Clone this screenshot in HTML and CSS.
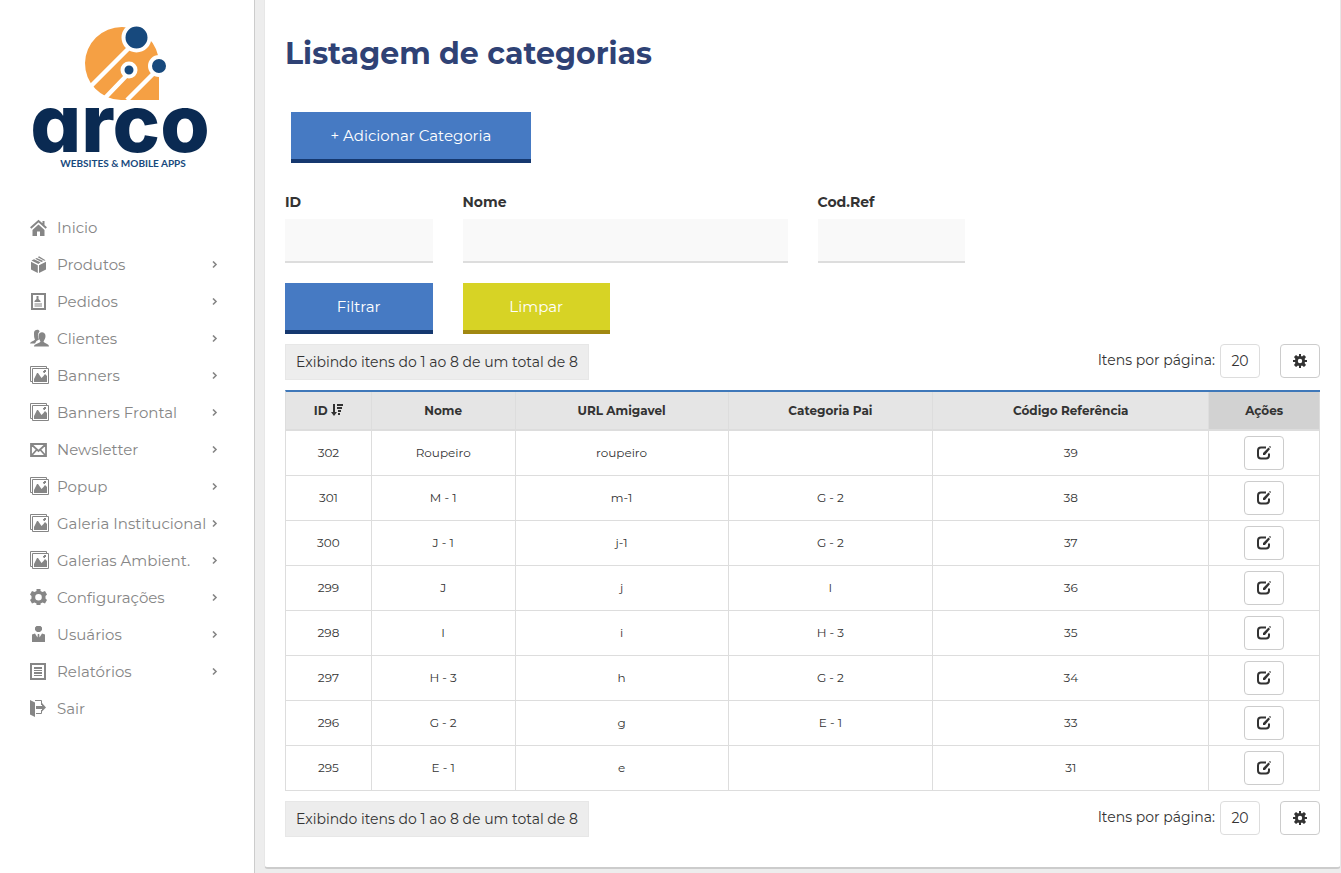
FILE: index.html
```html
<!DOCTYPE html>
<html lang="pt-BR">
<head>
<meta charset="utf-8">
<meta name="viewport" content="width=device-width, initial-scale=1">
<title>Listagem de categorias</title>
<link rel="stylesheet" href="styles.css">
</head>
<body>
<svg class="sprite" aria-hidden="true">
  <symbol id="i-home" viewBox="0 0 20 20"><path d="M.7 10 8.500 3 16.300 10M13.500 3v4" fill="none" stroke="currentColor" stroke-width="2"/><path d="M2.500 12 8.500 6.500 14.500 12v6H10v-4.500H7V18H2.500z"/></symbol>
  <symbol id="i-box" viewBox="0 0 20 20"><path d="M1 6.800l6.800 3.400V18L1 14.500zM9 10.200l7-3.400v7.700L9 18zM1.500 5.600 4 4.300l6.500 3L8.400 9zM5.200 3.700 6.700 2.900l6.600 3.200-1.800.8zM7.800 2.200 9 1.300l6.500 3.900-1.200.5z"/></symbol>
  <symbol id="i-order" viewBox="0 0 20 20"><path d="M2 2h13v15H2z" fill="none" stroke="currentColor" stroke-width="2"/><path d="M6.500 4h2v3l2 2v1h-6V9l2-2zM4.500 11.500H12v1H4.500zM4.500 13.500H12v1H4.500z"/></symbol>
  <symbol id="i-people" viewBox="0 0 20 20"><path d="M4 4c0-4 5.500-4 5.500-1.500C7.500 4.500 7.500 8 9 10.500l-2.500 1.500-1.500 2.500H0c.5-2 4-2.500 5-4-1-1.500-1-4-1-6.500zM8.500 7c0-5 7-5 7 0 0 2-.8 3.500-2 5.500 1 2 5.500 2 5.500 5H4c0-3 5.500-3 6.500-5-1.200-2-2-3.500-2-5.500z"/></symbol>
  <symbol id="i-image" viewBox="0 0 20 20"><path d="M2.500 15.500h-2v-15h16v2M2.500 2.500h16v15h-16z" fill="none" stroke="currentColor"/><path d="M4 16v-3l3-6h1l3.500 5 2-2 1.500-2 2 2v6zM13 6V5h1V4h2v2h-1v1h-1z"/></symbol>
  <symbol id="i-mail" viewBox="0 0 20 20"><path d="M1 4h15v12H1zM2 5l6.500 6L15 5M2 15l4.500-5M15 15l-4.500-5" fill="none" stroke="currentColor" stroke-width="1.800"/></symbol>
  <symbol id="i-gear" viewBox="0 0 20 20"><path fill-rule="evenodd" d="M6.500 1h4v2l2 1 2.500-1 2 3.500L15.500 8v2.500L17 12l-2 3.500-2.500-1-2 1V17h-4v-1.500l-2-1-2.500 1L0 12l1.500-1.500V8L0 6.500 2 3l2.500 1 2-1zm2 5a3.300 3.300 0 100 6.600 3.300 3.300 0 000-6.600z"/></symbol>
  <symbol id="i-user" viewBox="0 0 20 20"><path d="M6.500 1h4l1.500 1.500V5l-2 2H7L5 5V2.500zM2 9.500 5 8.500l2.500 4 .3-3.500h1.400l.3 3.500 2.500-4 3 1V17H2z"/></symbol>
  <symbol id="i-report" viewBox="0 0 20 20"><path d="M1 2h14v15H1z" fill="none" stroke="currentColor" stroke-width="2"/><path d="M4 5h8v2H4zM4 8h8v1H4zM4 10h8v2H4zM4 13h8v1H4z"/></symbol>
  <symbol id="i-exit" viewBox="0 0 20 20"><path d="M5 1.500h6.500V6M11.500 11v3.500H6" fill="none" stroke="currentColor"/><path d="M0 1l5 2.500V18l-5-2.500zM6 7h6V4l4 4.500-4 4V10H6z"/></symbol>
  <symbol id="i-arrow" viewBox="0 0 6 8"><path d="M1 .5l3 3-3 3" fill="none" stroke="currentColor" stroke-width="1.600"/></symbol>
  <symbol id="i-cog" viewBox="0 0 14 14"><path fill-rule="evenodd" d="M6 0h2v2l1 .4L11 1l2 2-1.400 2 .4 1h2v2h-2l-.4 1L13 11l-2 2-2-1.400-1 .4v2H6v-2l-1-.4L3 13l-2-2 1.400-2L2 8H0V6h2l.4-1L1 3l2-2 2 1.400L6 2zm1 4.800a2.200 2.200 0 100 4.400 2.200 2.200 0 000-4.400z"/></symbol>
  <symbol id="i-edit" viewBox="0 0 14 14"><path d="M9 1.500H4Q1 1.500 1 4.500v5q0 3 3 3h5q3 0 3-3V7.500" fill="none" stroke="currentColor" stroke-width="2"/><path d="M6 9V7l5.500-5.500L13 3 8 9zM12 .8l1-.8 1 1-.8 1z"/></symbol>
  <symbol id="i-sort" viewBox="0 0 12 12"><path d="M2 0h2v8h2l-3 4-3-4h2zM6 0h6v2H6zM6 3h5v2H6zM7 6h3v2H7zM7 9h2v2H7z"/></symbol>
</svg>
<div class="layout">
  <aside class="sidebar">
    <svg class="logo" viewBox="0 0 180 160" role="img" aria-label="Arco Websites &amp; Mobile Apps">
      <path d="M129 75H91A37 36.500 0 1 1 129 38z" fill="#f5a044"/>
      <path d="M60 62 107 15M74 74 99 48M97 75 129 43" stroke="#fff" stroke-width="4.500"/>
      <g fill="#17497d" stroke="#fff" stroke-width="4"><circle cx="106.500" cy="12.500" r="13"/><circle cx="129" cy="41" r="9"/><circle cx="99" cy="45" r="6.500"/></g>
      <text class="logo-name" x="90" y="127" text-anchor="middle">arco</text>
      <text class="logo-tag" x="93" y="142" text-anchor="middle">WEBSITES &amp; MOBILE APPS</text>
    </svg>
    <nav class="menu">
      <a href="#"><svg class="icon"><use href="#i-home"/></svg><span>Inicio</span></a>
      <a href="#"><svg class="icon"><use href="#i-box"/></svg><span>Produtos</span><svg class="arrow"><use href="#i-arrow"/></svg></a>
      <a href="#"><svg class="icon"><use href="#i-order"/></svg><span>Pedidos</span><svg class="arrow"><use href="#i-arrow"/></svg></a>
      <a href="#"><svg class="icon"><use href="#i-people"/></svg><span>Clientes</span><svg class="arrow"><use href="#i-arrow"/></svg></a>
      <a href="#"><svg class="icon"><use href="#i-image"/></svg><span>Banners</span><svg class="arrow"><use href="#i-arrow"/></svg></a>
      <a href="#"><svg class="icon"><use href="#i-image"/></svg><span>Banners Frontal</span><svg class="arrow"><use href="#i-arrow"/></svg></a>
      <a href="#"><svg class="icon"><use href="#i-mail"/></svg><span>Newsletter</span><svg class="arrow"><use href="#i-arrow"/></svg></a>
      <a href="#"><svg class="icon"><use href="#i-image"/></svg><span>Popup</span><svg class="arrow"><use href="#i-arrow"/></svg></a>
      <a href="#"><svg class="icon"><use href="#i-image"/></svg><span>Galeria Institucional</span><svg class="arrow"><use href="#i-arrow"/></svg></a>
      <a href="#"><svg class="icon"><use href="#i-image"/></svg><span>Galerias Ambient.</span><svg class="arrow"><use href="#i-arrow"/></svg></a>
      <a href="#"><svg class="icon"><use href="#i-gear"/></svg><span>Configurações</span><svg class="arrow"><use href="#i-arrow"/></svg></a>
      <a href="#"><svg class="icon"><use href="#i-user"/></svg><span>Usuários</span><svg class="arrow"><use href="#i-arrow"/></svg></a>
      <a href="#"><svg class="icon"><use href="#i-report"/></svg><span>Relatórios</span><svg class="arrow"><use href="#i-arrow"/></svg></a>
      <a href="#"><svg class="icon"><use href="#i-exit"/></svg><span>Sair</span></a>
    </nav>
  </aside>
  <main class="panel">
    <h1>Listagem de categorias</h1>
    <a class="btn btn-add" href="#">+ Adicionar Categoria</a>
    <form class="filters">
      <div class="field"><label for="f-id">ID</label><input id="f-id" type="text"></div>
      <div class="field field-wide"><label for="f-nome">Nome</label><input id="f-nome" type="text"></div>
      <div class="field"><label for="f-ref">Cod.Ref</label><input id="f-ref" type="text"></div>
      <button class="btn btn-filter" type="button">Filtrar</button>
      <button class="btn btn-clear" type="reset">Limpar</button>
    </form>
    <div class="toolbar">
      <div class="summary">Exibindo itens do 1 ao 8 de um total de 8</div>
      <label for="size-top">Itens por página:</label>
      <button id="size-top" class="tool size" type="button">20</button>
      <button class="tool" type="button" aria-label="Opções"><svg class="glyph"><use href="#i-cog"/></svg></button>
    </div>
    <table class="grid">
      <colgroup><col class="c-id"><col class="c-nome"><col class="c-url"><col class="c-pai"><col class="c-ref"><col class="c-acoes"></colgroup>
      <thead><tr><th>ID <svg class="sort"><use href="#i-sort"/></svg></th><th>Nome</th><th>URL Amigavel</th><th>Categoria Pai</th><th>Código Referência</th><th class="actions">Ações</th></tr></thead>
      <tbody>
        <tr><td>302</td><td>Roupeiro</td><td>roupeiro</td><td></td><td>39</td><td><button class="tool" type="button" aria-label="Editar"><svg class="glyph"><use href="#i-edit"/></svg></button></td></tr>
        <tr><td>301</td><td>M - 1</td><td>m-1</td><td>G - 2</td><td>38</td><td><button class="tool" type="button" aria-label="Editar"><svg class="glyph"><use href="#i-edit"/></svg></button></td></tr>
        <tr><td>300</td><td>J - 1</td><td>j-1</td><td>G - 2</td><td>37</td><td><button class="tool" type="button" aria-label="Editar"><svg class="glyph"><use href="#i-edit"/></svg></button></td></tr>
        <tr><td>299</td><td>J</td><td>j</td><td>I</td><td>36</td><td><button class="tool" type="button" aria-label="Editar"><svg class="glyph"><use href="#i-edit"/></svg></button></td></tr>
        <tr><td>298</td><td>I</td><td>i</td><td>H - 3</td><td>35</td><td><button class="tool" type="button" aria-label="Editar"><svg class="glyph"><use href="#i-edit"/></svg></button></td></tr>
        <tr><td>297</td><td>H - 3</td><td>h</td><td>G - 2</td><td>34</td><td><button class="tool" type="button" aria-label="Editar"><svg class="glyph"><use href="#i-edit"/></svg></button></td></tr>
        <tr><td>296</td><td>G - 2</td><td>g</td><td>E - 1</td><td>33</td><td><button class="tool" type="button" aria-label="Editar"><svg class="glyph"><use href="#i-edit"/></svg></button></td></tr>
        <tr><td>295</td><td>E - 1</td><td>e</td><td></td><td>31</td><td><button class="tool" type="button" aria-label="Editar"><svg class="glyph"><use href="#i-edit"/></svg></button></td></tr>
      </tbody>
    </table>
    <div class="toolbar">
      <div class="summary">Exibindo itens do 1 ao 8 de um total de 8</div>
      <label for="size-bottom">Itens por página:</label>
      <button id="size-bottom" class="tool size" type="button">20</button>
      <button class="tool" type="button" aria-label="Opções"><svg class="glyph"><use href="#i-cog"/></svg></button>
    </div>
  </main>
</div>
</body>
</html>
```
FILE: styles.css
```css
* { box-sizing: border-box; }
body {
  margin: 0;
  background: #ededed;
  color: #333;
  font: 400 14px/20px Montserrat, Inter, sans-serif;
}
button, input { font: inherit; color: inherit; }
svg { fill: currentColor; flex: none; }
.sprite { position: absolute; width: 0; height: 0; }

.layout { display: flex; min-height: 100vh; }
.sidebar {
  flex: none;
  width: 255px;
  padding: 25px 30px;
  background: #fff;
  border-right: 1px solid #ccc;
}
.logo { display: block; width: 180px; height: 160px; margin-bottom: 24px; }
.logo-name { font: 800 80px Inter, sans-serif; font-feature-settings: "cv11"; fill: #0a2a52; }
.logo-tag { font: 700 10px Lato, sans-serif; fill: #17497d; }
.menu { display: flex; flex-direction: column; }
.menu a {
  display: flex;
  align-items: center;
  height: 37px;
  color: #868686;
  font-size: 15px;
  text-decoration: none;
}
.menu span { flex: 1; white-space: nowrap; }
.icon { width: 20px; height: 20px; margin-right: 7px; }
.arrow { width: 6px; height: 8px; margin-right: 6px; }

.panel {
  flex: 1;
  min-width: 0;
  align-self: flex-start;
  margin: 0 0 4px 9px;
  padding: 34px 20px 30px;
  background: #fff;
  border: 1px solid #e7e7e7;
  border-top: 0;
  border-bottom: 2px solid #ccc;
  border-radius: 0 0 4px 4px;
}
h1 { margin: 0 0 38px; color: #2f4275; font-size: 30px; line-height: 40px; font-weight: 700; }
.btn {
  display: block;
  height: 51px;
  border: 0;
  border-bottom: 4px solid #15386f;
  background: #467ac3;
  color: #fff;
  font-size: 15px;
  line-height: 47px;
  padding: 0;
  text-align: center;
  text-decoration: none;
}
.btn-add { width: 240px; margin-left: 6px; }
.filters {
  display: grid;
  grid-template-columns: repeat(12, 1fr);
  gap: 20px 30px;
  margin: 29px 0 10px;
}
.field { grid-column: span 2; }
.field-wide { grid-column: span 4; }
.field label { display: block; margin-bottom: 7px; font-weight: 700; }
.field input {
  display: block;
  width: 100%;
  height: 44px;
  padding: 6px 12px;
  border: 0;
  border-bottom: 2px solid #ddd;
  background: #f9f9f9;
}
.btn-filter { grid-column: 1 / span 2; }
.btn-clear { grid-column: 3 / span 2; background: #d7d325; border-color: #a18811; }

.toolbar { display: flex; align-items: flex-start; }
.summary { margin-right: auto; padding: 7px 10px; border: 1px solid #e7e7e7; background: #ededed; }
.toolbar > label { margin-right: 5px; line-height: 32px; }
.tool {
  display: inline-flex;
  align-items: center;
  justify-content: center;
  width: 40px;
  height: 34px;
  padding: 0;
  border: 1px solid #ccc;
  border-radius: 4px;
  background: #fff;
}
.size { margin-right: 20px; border-color: #ddd; }
.glyph { width: 14px; height: 14px; }

.grid {
  width: 100%;
  margin: 10px 0;
  table-layout: fixed;
  border-collapse: separate;
  border-spacing: 0;
  border-top: 2px solid #3f78b9;
  border-left: 1px solid #ddd;
  font-size: 12px;
  text-align: center;
}
.c-id { width: 8.3%; }
.c-nome { width: 13.9%; }
.c-url { width: 20.6%; }
.c-pai { width: 19.8%; }
.c-ref { width: 26.7%; }
.c-acoes { width: 10.7%; }
.grid th { height: 39px; padding: 0 8px; background: #e5e5e5; font-weight: 700; border: solid #ddd; border-width: 0 1px 2px 0; }
.grid .actions { background: #d2d2d2; }
.grid td { height: 45px; padding: 0 8px; border: solid #ddd; border-width: 0 1px 1px 0; vertical-align: middle; }
.grid .tool { vertical-align: middle; }
.sort { width: 12px; height: 12px; vertical-align: -1px; }
```
